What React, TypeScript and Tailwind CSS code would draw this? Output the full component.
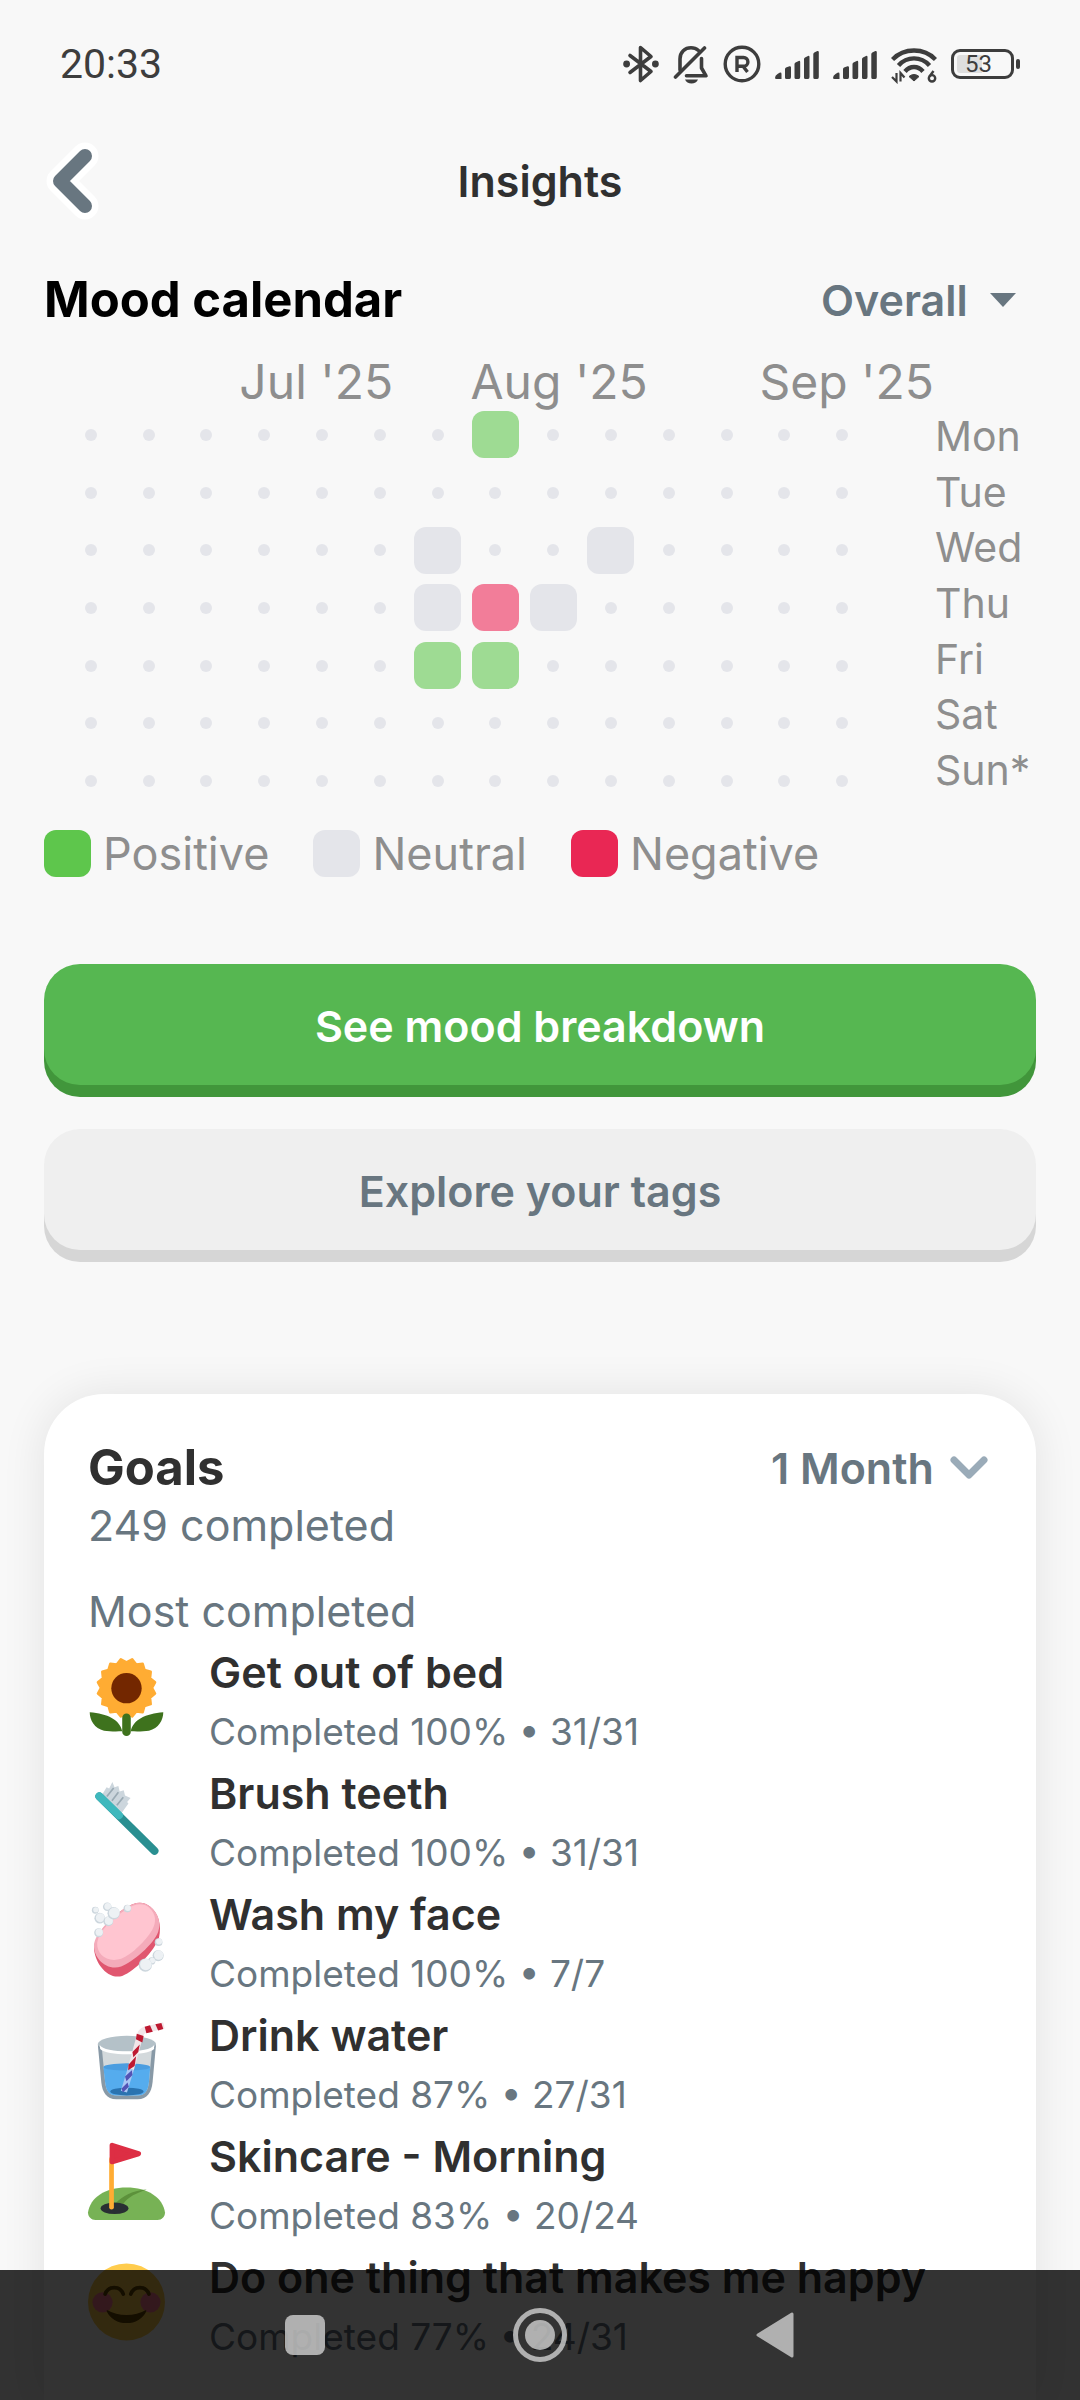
import React from "react";

type Mood = "positive" | "neutral" | "negative";

const DAYS = ["Mon", "Tue", "Wed", "Thu", "Fri", "Sat", "Sun*"];
const WEEKS = Array.from({ length: 14 }, (_, i) => i);

const ENTRIES: Record<string, Mood> = {
  "0-7": "positive",
  "2-6": "neutral",
  "2-9": "neutral",
  "3-6": "neutral",
  "3-7": "negative",
  "3-8": "neutral",
  "4-6": "positive",
  "4-7": "positive",
};

const CELL_COLORS: Record<Mood, string> = {
  positive: "bg-[#9edb93]",
  neutral: "bg-[#e4e5ea]",
  negative: "bg-[#f27d99]",
};

const LEGEND = [
  { label: "Positive", color: "bg-[#5ec64c]" },
  { label: "Neutral", color: "bg-[#e4e5ea]" },
  { label: "Negative", color: "bg-[#e92754]" },
];

function BluetoothIcon() {
  return (
    <svg width="36" height="40" viewBox="0 0 36 40" fill="none" stroke="#3d3d3d" strokeWidth="3.6" strokeLinejoin="round" strokeLinecap="round" aria-hidden="true">
      <path d="M7 11.5 28 27.5 17.5 36.5V3.5L28 12.5 7 28.5" />
      <circle cx="3.6" cy="20" r="3.4" fill="#3d3d3d" stroke="none" />
      <circle cx="32.4" cy="20" r="3.4" fill="#3d3d3d" stroke="none" />
    </svg>
  );
}

function BellOffIcon() {
  return (
    <svg width="36" height="40" viewBox="0 0 36 40" fill="none" stroke="#3d3d3d" strokeWidth="3.6" strokeLinejoin="round" strokeLinecap="round" aria-hidden="true">
      <path d="M7 26V15C7 8 12 3.800 18 3.800c3 0 5.500 1 7.500 2.700" />
      <path d="M2.500 33 31.500 4" />
      <path d="M28.500 14.500V24l4.500 7.800H13.500" />
      <path d="M12 35.500h13c-1 2.500-3.500 4-6.500 4s-5.500-1.500-6.500-4z" fill="#3d3d3d" stroke="none" />
    </svg>
  );
}

function RegisteredIcon() {
  return (
    <svg width="38" height="40" viewBox="0 0 38 40" fill="none" stroke="#3d3d3d" aria-hidden="true">
      <circle cx="19" cy="20" r="16.800" strokeWidth="3.400" />
      <path d="M14 28V13.500h6.500a4.200 4.200 0 0 1 0 8.800H14M20 22.300 24.500 28" strokeWidth="3.400" />
    </svg>
  );
}

function SignalIcon() {
  return (
    <svg width="44" height="40" viewBox="0 0 44 40" fill="#3d3d3d" aria-hidden="true">
      <path d="M0 34q0-2.500 2.500-4l2-1.200q2-.8 2 1.200v5H1.500q-1.500 0-1.500-1z" />
      <path d="M10 25q0-1 1-1.600l3.500-1.200q1.500-.2 1.500 1.200V33q0 2-1.500 2h-3Q10 35 10 33.500z" />
      <path d="M19.500 20q0-1 1-1.600l3.200-1.500q1.500-.3 1.500 1.200V33q0 2-1.500 2h-2.700q-1.500 0-1.500-1.500z" />
      <path d="M29 15q0-1 1-1.600l3-1.500q1.500-.3 1.500 1.200V33q0 2-1.500 2h-2.500Q29 35 29 33.500z" />
      <path d="M38.300 10q0-1 1-1.600l3-1.300q1.500-.3 1.500 1.200V33q0 2-1.500 2h-2.500q-1.500 0-1.500-1.500z" />
    </svg>
  );
}

function WifiIcon() {
  return (
    <svg width="46" height="40" viewBox="0 0 46 40" fill="none" stroke="#3d3d3d" aria-hidden="true">
      <path d="M1.500 15.500C13 3.500 33 3.500 44.500 15.500" strokeWidth="4.400" />
      <path d="M7.500 21.500C16 12 30 12 38.500 21.500" strokeWidth="4.400" />
      <path d="M14 27.500C19 21.500 27 21.500 32 27.500" strokeWidth="4.400" />
      <path d="M23 37 18 32.500q5-4 10 0z" fill="#3d3d3d" strokeWidth="1" />
      <path d="M5.500 29v8.500L1 33M9.500 37.500V29l4 4.500" strokeWidth="2.200" />
      <path d="M42.500 27 38.500 32.500" strokeWidth="2.400" />
      <circle cx="41" cy="34.300" r="3.200" strokeWidth="2.400" />
    </svg>
  );
}

function Battery() {
  return (
    <div className="flex items-center gap-[2px]" aria-label="Battery 53 percent">
      <div className="flex h-[30px] w-[63px] rounded-[9px] border-[3px] border-[#3d3d3d] bg-[linear-gradient(90deg,#dedede_50%,#f8f8f8_50%)] bg-clip-content p-[3px]">
        <span className="-mx-1 w-full self-center text-center font-[Roboto] text-[24px] leading-none text-[#3d3d3d]">53</span>
      </div>
      <div className="h-[10px] w-1 rounded-full bg-[#3d3d3d]" />
    </div>
  );
}

function StatusBar() {
  return (
    <div className="flex h-32 items-center justify-between px-[60px]">
      <time className="font-[Roboto] text-[41px] leading-none text-[#3d3d3d]">20:33</time>
      <div className="flex items-center gap-[14px]">
        <BluetoothIcon />
        <BellOffIcon />
        <RegisteredIcon />
        <SignalIcon />
        <SignalIcon />
        <WifiIcon />
        <Battery />
      </div>
    </div>
  );
}

function Header() {
  return (
    <header className="grid h-[106px] grid-cols-[1fr_auto_1fr] items-center px-11">
      <button type="button" aria-label="Back" className="justify-self-start">
        <svg width="56" height="78" viewBox="0 0 56 78" fill="none" strokeLinecap="round" strokeLinejoin="round">
          <path d="M41 14 16 39l25 25" stroke="#fff" strokeWidth="27" />
          <path d="M41 14 16 39l25 25" stroke="#687680" strokeWidth="14" />
        </svg>
      </button>
      <h1 className="text-[43px] font-semibold text-[#303030]">Insights</h1>
    </header>
  );
}

function MoodCalendar() {
  return (
    <section className="pt-8">
      <div className="flex h-[68px] items-center justify-between">
        <h2 className="text-[49px] font-bold text-black">Mood calendar</h2>
        <label className="flex items-center gap-[22px] pr-5 text-[#687680]">
          <select aria-label="Mood filter" className="appearance-none bg-transparent text-[43px] font-semibold outline-none">
            <option>Overall</option>
          </select>
          <svg width="26" height="14" viewBox="0 0 26 14" fill="currentColor" aria-hidden="true">
            <path d="M0 0h26L13 14z" />
          </svg>
        </label>
      </div>
      <div className="flex justify-between pt-6 pl-[18px] text-[#8e8e8e]">
        <div className="w-[809px]">
          <div className="grid h-12 grid-cols-14 items-center text-[48px] leading-none whitespace-nowrap">
            <span className="col-start-4 w-0 pl-1">Jul '25</span>
            <span className="col-start-8 w-0 pl-1">Aug '25</span>
            <span className="col-start-13 w-0 pl-1">Sep '25</span>
          </div>
          <div className="grid h-[404px] grid-cols-14 grid-rows-7 place-items-center">
            {DAYS.map((day, row) =>
              WEEKS.map((week) => {
                const mood = ENTRIES[`${row}-${week}`];
                return mood ? (
                  <div key={`${day}-${week}`} className={`size-[47px] rounded-xl ${CELL_COLORS[mood]}`} />
                ) : (
                  <div key={`${day}-${week}`} className="size-3 rounded-full bg-[#e4e5ea]" />
                );
              }),
            )}
          </div>
        </div>
        <ul className="mt-[51px] grid h-[389px] w-[101px] grid-rows-7 items-center text-[41px] leading-none">
          {DAYS.map((day) => (
            <li key={day}>{day}</li>
          ))}
        </ul>
      </div>
      <ul className="mt-5 flex gap-11 text-[#8e8e8e]">
        {LEGEND.map((item) => (
          <li key={item.label} className="flex items-center gap-3">
            <span className={`size-[47px] rounded-xl ${item.color}`} />
            <span className="text-[45px] leading-none">{item.label}</span>
          </li>
        ))}
      </ul>
    </section>
  );
}

function Sunflower() {
  const points = Array.from({ length: 32 }, (_, i) => {
    const angle = ((i + 0.5) * Math.PI) / 16 + Math.PI / 32;
    const radius = i % 2 ? 11.9 : 13.6;
    return `${(18 + radius * Math.sin(angle)).toFixed(2)},${(14 - radius * Math.cos(angle)).toFixed(2)}`;
  }).join(" ");
  return (
    <>
      <polygon points={points} fill="#ffac33" stroke="#ffac33" strokeWidth="1.200" strokeLinejoin="round" />
      <circle cx="18" cy="14.100" r="7.100" fill="#732700" />
      <path d="M.8 25.400C9 26 15 29 16 34.300c-3 0-6 .1-8.500-.3C3 33 .8 29 .8 25.400zM35.200 25.400C27 26 21 29 20 34.300c3 0 6 .1 8.500-.3 4.500-1 6.700-5 6.700-8.600z" fill="#3e721d" />
      <path d="M18 28v6.500" stroke="#3e721d" strokeWidth="4" strokeLinecap="round" />
    </>
  );
}

function Toothbrush() {
  return (
    <>
      <path d="m6.500 7.500 2.200-3.600 1.200.5 1.500-3 1 2.500 1.800-.6.6 2.500 1.900-.5.6 2.400 2.600 1.200-1.600 1.800.6.800-3 4.200z" fill="#ccd6dd" />
      <path d="m8.800 8.200 3.200-4M11.200 10.200l3-4M13.500 12.300l3-3.800" stroke="#9aaab4" strokeWidth=".8" />
      <path d="M5.300 8.100 31.100 33.600" stroke="#2a8f91" strokeWidth="3.700" strokeLinecap="round" />
      <path d="M5.300 8.100 14.500 17" stroke="#3fb8bd" strokeWidth="3.700" strokeLinecap="round" />
    </>
  );
}

const BUBBLES = [
  [3.4, 4.8, 1.6], [9, 3.2, 2], [5.5, 8.5, 2.5], [9.5, 10, 2.3], [12, 6.2, 2.9],
  [18.4, 4, 1.8], [5, 15.3, 2.1], [33, 19.7, 1.8], [32.8, 26, 2.6], [29.8, 28.5, 1.7], [26.8, 30.4, 3.1],
];

function Soap() {
  return (
    <>
      <path d="M2.800 22.400C3.500 16 10 9 17 4c5-3.500 9-3.500 12-1 4 3 5.500 9 4.200 14.500C31 24 22 33 16 35.500 9 37.500 3 29 2.800 22.400z" fill="#e0566f" />
      <path d="M2.800 21C3.500 15.500 10 9 17 4c5-3.500 9-3.500 12-1 3.800 2.800 5.300 7.500 3.800 12C30.500 21 21 29 15.500 31.100 8.500 33.300 2.500 27 2.800 21z" fill="#f4abba" />
      <path d="M4.300 20C5 14.500 11 9 18 4.300c4-2.800 8-3 10.500-.8 3.500 3 3.500 7 1.500 10.500C27 19 20.500 25.500 15.500 27.500 9 29.500 4 25.500 4.300 20z" fill="#ffc5d0" />
      {BUBBLES.map(([cx, cy, r]) => (
        <g key={`${cx}-${cy}`}>
          <circle cx={cx} cy={cy} r={r} fill="#ccd6dd" />
          <circle cx={cx + 0.25} cy={cy - 0.25} r={r - 0.4} fill="#edf1f4" />
        </g>
      ))}
    </>
  );
}

function WaterGlass() {
  return (
    <>
      <path d="M4.600 11h27.200l-1.600 17.500c-.5 5-2.500 8-7 8.100h-10c-4.500-.1-6.500-3.100-7-8.100z" fill="#8899a6" />
      <ellipse cx="18.200" cy="10.800" rx="13.600" ry="3.900" fill="#b4c1c8" />
      <path d="M6.500 13c7 1.800 16.400 1.800 23.400 0l-1.400 15.500c-.5 4.500-2 6.200-5.300 6.300H13.500c-3.500-.1-5-1.800-5.500-6.300z" fill="#d3d9dc" />
      <path d="M7.200 21.500h21.900l-.6 7c-.5 4.500-2 6.200-5.300 6.300H13.500c-3.500-.1-5-1.800-5.500-6.300z" fill="#55acee" />
      <ellipse cx="18.150" cy="21.500" rx="10.900" ry="1.700" fill="#4a9de0" />
      <ellipse cx="18.200" cy="33" rx="7.800" ry="1.800" fill="#2a73b0" />
      <path d="M16.800 33 20 22.500" stroke="#a9c6f5" strokeWidth="3" />
      <path d="m15.700 31.500 2.800-2.800.6 2-2.800 2.700zM17.300 26l3.200-3 .3 2.200-2.800 3z" fill="#5353b5" />
      <path d="M5.500 11.200c2 4 23.400 4 25.400 0v1.900c-3 3.300-22.400 3.300-25.200 0z" fill="#fff" />
      <path d="M20 22.500 24.500 6.200Q25 4.600 26.800 4.100L35.500 2" stroke="#f2e5e8" strokeWidth="3" fill="none" />
      <path d="m18.900 20.500 3.600-4-.7 4.500-3 2zM20.800 14.500l3.400-3.500-.7 3.500-2.300 2.500zM22.800 6l3.200 1-.6 3-3-1.500zM26.500 2.700l2.500-.7 1.300 3-3 .7zM31.500 1.500l2.800-.6.900 2.800-2.400.7z" fill="#be1931" />
    </>
  );
}

function GolfFlag() {
  return (
    <>
      <path d="M0 33C1 26 8 21.300 18 21.300S35 26 36 33c0 2-1.500 3.500-3.500 3.500h-29C1.500 36.500 0 35 0 33z" fill="#77b255" />
      <path d="M13 28.500c3-3 8-6 14.500-6.300-4.500 1.500-9 3.500-11 6.800z" fill="#5c913b" />
      <ellipse cx="12.400" cy="31" rx="6.500" ry="2.700" fill="#292f33" />
      <path d="M11 8v22.500" stroke="#ffac33" strokeWidth="2.200" strokeLinecap="round" />
      <path d="M11.300 1.600 23.600 5.500 11.300 9.200z" fill="#dd2e44" stroke="#dd2e44" strokeWidth="2.400" strokeLinejoin="round" />
    </>
  );
}

function SmilingFace() {
  return (
    <>
      <circle cx="18" cy="18.200" r="18" fill="#ffcc4d" />
      <circle cx="6.800" cy="18.400" r="4.700" fill="#ff7892" />
      <circle cx="29.200" cy="18.400" r="4.700" fill="#ff7892" />
      <path d="M8 14.500c1.500-4 7-4 8.500 0M20 14.500c1.500-4 7-4 8.500 0" stroke="#664500" strokeWidth="1.700" strokeLinecap="round" fill="none" />
      <path d="M9 22.400c5 3 13 3 18 0-1.500 3.300-5 5.400-9 5.400s-7.500-2.100-9-5.400z" fill="#664500" stroke="#664500" strokeWidth=".6" strokeLinejoin="round" />
    </>
  );
}

const GOALS = [
  { title: "Get out of bed", detail: "Completed 100% • 31/31", Art: Sunflower },
  { title: "Brush teeth", detail: "Completed 100% • 31/31", Art: Toothbrush },
  { title: "Wash my face", detail: "Completed 100% • 7/7", Art: Soap },
  { title: "Drink water", detail: "Completed 87% • 27/31", Art: WaterGlass },
  { title: "Skincare - Morning", detail: "Completed 83% • 20/24", Art: GolfFlag },
  { title: "Do one thing that makes me happy", detail: "Completed 77% • 24/31", Art: SmilingFace },
];

function GoalsCard() {
  return (
    <section className="mt-36 grow rounded-t-[60px] bg-white px-11 pt-11 text-[#687680] shadow-[0_0_45px_rgba(0,0,0,0.09)]">
      <div className="flex h-[60px] items-center justify-between">
        <h2 className="text-[49px] font-bold text-[#303030]">Goals</h2>
        <label className="flex items-center gap-4 pr-1">
          <select aria-label="Period" className="appearance-none bg-transparent text-[43px] font-semibold outline-none">
            <option>1 Month</option>
          </select>
          <svg width="38" height="24" viewBox="0 0 38 24" fill="none" stroke="#9aabb8" strokeWidth="7" strokeLinecap="round" strokeLinejoin="round" aria-hidden="true">
            <path d="M4 4 19 19 34 4" />
          </svg>
        </label>
      </div>
      <p className="text-[43px] leading-[54px]">249 completed</p>
      <h3 className="mt-8 text-[43px] leading-[54px]">Most completed</h3>
      <ul className="mt-1">
        {GOALS.map(({ title, detail, Art }) => (
          <li key={title} className="flex h-[121px] items-start gap-11">
            <svg className="mt-4 shrink-0 overflow-visible" width="77" height="77" viewBox="0 0 36 36" fill="none" aria-hidden="true">
              <Art />
            </svg>
            <div className="whitespace-nowrap">
              <h4 className="text-[43px] leading-[60px] font-semibold text-[#303030]">{title}</h4>
              <p className="text-[37px] leading-[60px]">{detail}</p>
            </div>
          </li>
        ))}
      </ul>
    </section>
  );
}

function NavigationBar() {
  return (
    <nav className="fixed inset-x-0 bottom-0 flex h-[130px] justify-center bg-black/80">
      <button type="button" aria-label="Recent apps" className="flex w-[235px] items-center justify-center">
        <span className="size-10 rounded-lg bg-[#cfcfcf]/80" />
      </button>
      <button type="button" aria-label="Home" className="flex w-[235px] items-center justify-center">
        <span className="flex size-[54px] items-center justify-center rounded-full border-[5px] border-[#cfcfcf]/80">
          <span className="size-[30px] rounded-full bg-[#cfcfcf]/80" />
        </span>
      </button>
      <button type="button" aria-label="Back" className="flex w-[235px] items-center justify-center">
        <svg width="38" height="46" viewBox="0 0 38 46" fill="#b0b0b0" stroke="#b0b0b0" strokeWidth="3" strokeLinejoin="round" aria-hidden="true">
          <path d="M36 2v42L2 23z" />
        </svg>
      </button>
    </nav>
  );
}

export default function App() {
  return (
    <div className="flex min-h-screen flex-col bg-[#f8f8f8] font-[Inter,sans-serif]">
      <StatusBar />
      <Header />
      <main className="flex grow flex-col px-11">
        <MoodCalendar />
        <button type="button" className="mt-[87px] h-[121px] rounded-[36px] bg-[#56b751] pt-1 text-[43px] font-semibold text-white shadow-[0_12px_0_#41963b]">
          See mood breakdown
        </button>
        <button type="button" className="mt-11 h-[121px] rounded-[36px] bg-[#efefef] pt-1 text-[43px] font-semibold text-[#687680] shadow-[0_12px_0_#d6d6d6]">
          Explore your tags
        </button>
        <GoalsCard />
      </main>
      <NavigationBar />
    </div>
  );
}
